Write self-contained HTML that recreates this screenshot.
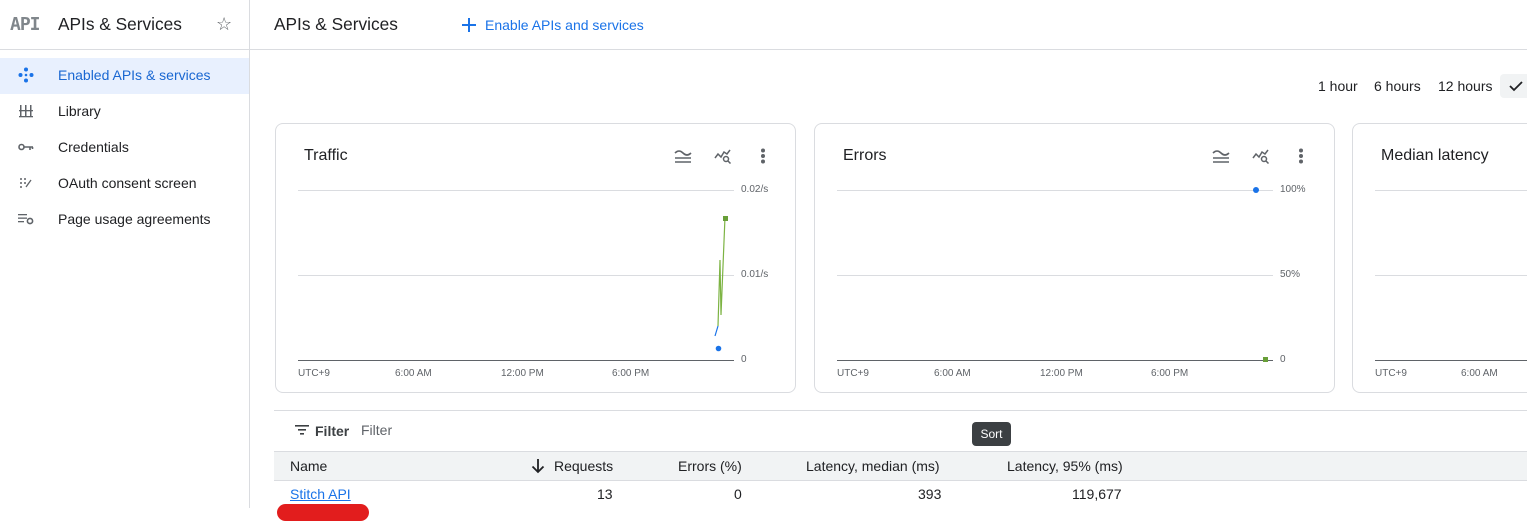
<!DOCTYPE html>
<html><head><meta charset="utf-8"><style>
*{margin:0;padding:0;box-sizing:border-box}
body{width:1527px;height:522px;overflow:hidden;background:#fff;font-family:"Liberation Sans",Arial,sans-serif;color:#202124;position:relative}
.a{position:absolute;white-space:nowrap}
.card{position:absolute;top:123px;height:270px;border:1px solid #dadce0;border-radius:8px;background:#fff}
.grid{position:absolute;height:1px;background:#dadce0}
.axis{position:absolute;height:1px;background:#5f6368}
.sm{font-size:10px;color:#5f6368}
.nav{font-size:14px}
</style></head><body>
<div class="a" style="left:249px;top:0;width:1px;height:508px;background:#dadce0"></div>
<div class="a" style="left:0;top:49px;width:1527px;height:1px;background:#dadce0"></div>
<div class="a" style="left:10px;top:14px;font-family:'DejaVu Sans Mono',monospace;font-weight:bold;font-size:18px;color:#80868b;letter-spacing:-1px">API</div>
<div class="a" style="left:58px;top:14px;font-size:17.3px">APIs &amp; Services</div>
<div class="a" style="left:216px;top:14px;font-size:18px;color:#5f6368">☆</div>
<div class="a" style="left:0;top:58px;width:249px;height:36px;background:#e8f0fe"></div>
<svg class="a" style="left:18px;top:67px" width="16" height="16" viewBox="0 0 16 16" fill="#1a73e8"><circle cx="8" cy="2.5" r="2"/><circle cx="8" cy="13.5" r="2"/><circle cx="2.5" cy="8" r="2"/><circle cx="13.5" cy="8" r="2"/><circle cx="8" cy="8" r="1.3"/></svg>
<div class="a nav" style="left:58px;top:67px;color:#1967d2">Enabled APIs &amp; services</div>
<svg class="a" style="left:19px;top:104px" width="14" height="14" viewBox="0 0 14 14" fill="#5f6368"><rect x="1" y="1" width="1.5" height="12"/><rect x="6" y="1" width="1.5" height="12"/><rect x="11" y="1" width="1.5" height="12"/><rect x="0" y="6" width="14" height="1.3"/><rect x="0" y="12" width="14" height="1.3"/></svg>
<div class="a nav" style="left:58px;top:103px">Library</div>
<svg class="a" style="left:18px;top:143px" width="16" height="8" viewBox="0 0 16 8"><circle cx="3.5" cy="4" r="2.5" fill="none" stroke="#5f6368" stroke-width="1.6"/><path d="M6 4h9M12 4v3M14.5 4v2" stroke="#5f6368" stroke-width="1.6"/></svg>
<div class="a nav" style="left:58px;top:139px">Credentials</div>
<svg class="a" style="left:19px;top:177px" width="14" height="12" viewBox="0 0 14 12" fill="#5f6368"><circle cx="2" cy="2" r="1"/><circle cx="6" cy="2" r="1"/><circle cx="2" cy="6" r="1"/><circle cx="6" cy="6" r="1"/><circle cx="2" cy="10" r="1"/><path d="M7 10l5-7" stroke="#5f6368" stroke-width="1.3"/></svg>
<div class="a nav" style="left:58px;top:175px">OAuth consent screen</div>
<svg class="a" style="left:18px;top:213px" width="16" height="12" viewBox="0 0 16 12" fill="#5f6368"><rect x="0" y="1" width="9" height="1.3"/><rect x="0" y="4.5" width="9" height="1.3"/><rect x="0" y="8" width="6" height="1.3"/><circle cx="12" cy="8" r="2.6" fill="none" stroke="#5f6368" stroke-width="1.6"/></svg>
<div class="a nav" style="left:58px;top:211px">Page usage agreements</div>
<div class="a" style="left:274px;top:14px;font-size:17.3px">APIs &amp; Services</div>
<svg class="a" style="left:461px;top:17px" width="16" height="16" viewBox="0 0 16 16"><path d="M8 1v14M1 8h14" stroke="#1a73e8" stroke-width="2"/></svg>
<div class="a" style="left:485px;top:17px;font-size:14px;color:#1a73e8">Enable APIs and services</div>
<div class="a" style="left:1318px;top:78px;font-size:14px">1 hour</div>
<div class="a" style="left:1374px;top:78px;font-size:14px">6 hours</div>
<div class="a" style="left:1438px;top:78px;font-size:14px">12 hours</div>
<div class="a" style="left:1500px;top:74px;width:30px;height:24px;background:#f1f3f4;border-radius:4px 0 0 4px"></div>
<svg class="a" style="left:1509px;top:80px" width="14" height="12" viewBox="0 0 14 12"><path d="M1 6l4 4 8-8" fill="none" stroke="#202124" stroke-width="1.8"/></svg>
<div class="card" style="left:275px;width:521px"></div>
<div class="a" style="left:304px;top:147px;font-size:16px">Traffic</div>
<div class="card" style="left:814px;width:521px"></div>
<div class="a" style="left:843px;top:147px;font-size:16px">Errors</div>
<div class="card" style="left:1352px;width:200px"></div>
<div class="a" style="left:1381px;top:147px;font-size:16px">Median latency</div>
<svg class="a" style="left:674px;top:148px" width="18" height="16" viewBox="0 0 18 16" fill="none" stroke="#5f6368" stroke-width="1.6"><path d="M1 5q4-4 8 0t8 0M1 10h16M1 14h16"/></svg>
<svg class="a" style="left:714px;top:148px" width="18" height="16" viewBox="0 0 18 16" fill="none" stroke="#5f6368" stroke-width="1.5"><path d="M1 10l3-4 3 3 3-5 3 2 3-4"/><circle cx="12" cy="11" r="2.5"/><path d="M14 13l2.5 2.5"/></svg>
<svg class="a" style="left:760px;top:148px" width="6" height="16" fill="#5f6368"><circle cx="3" cy="2.5" r="2"/><circle cx="3" cy="8" r="2"/><circle cx="3" cy="13.5" r="2"/></svg>
<svg class="a" style="left:1212px;top:148px" width="18" height="16" viewBox="0 0 18 16" fill="none" stroke="#5f6368" stroke-width="1.6"><path d="M1 5q4-4 8 0t8 0M1 10h16M1 14h16"/></svg>
<svg class="a" style="left:1252px;top:148px" width="18" height="16" viewBox="0 0 18 16" fill="none" stroke="#5f6368" stroke-width="1.5"><path d="M1 10l3-4 3 3 3-5 3 2 3-4"/><circle cx="12" cy="11" r="2.5"/><path d="M14 13l2.5 2.5"/></svg>
<svg class="a" style="left:1298px;top:148px" width="6" height="16" fill="#5f6368"><circle cx="3" cy="2.5" r="2"/><circle cx="3" cy="8" r="2"/><circle cx="3" cy="13.5" r="2"/></svg>
<div class="grid" style="left:298px;top:190px;width:436px"></div>
<div class="grid" style="left:298px;top:275px;width:436px"></div>
<div class="axis" style="left:298px;top:360px;width:436px"></div>
<div class="a sm" style="left:741px;top:184px">0.02/s</div>
<div class="a sm" style="left:741px;top:269px">0.01/s</div>
<div class="a sm" style="left:741px;top:354px">0</div>
<div class="a sm" style="left:298px;top:368px">UTC+9</div>
<div class="a sm" style="left:395px;top:368px">6:00 AM</div>
<div class="a sm" style="left:501px;top:368px">12:00 PM</div>
<div class="a sm" style="left:612px;top:368px">6:00 PM</div>
<svg class="a" style="left:700px;top:210px" width="40" height="150"><path d="M15 126l3-10" stroke="#1a73e8" stroke-width="1.2"/><path d="M18 116l2-66 1 55 4-98" stroke="#7cb342" stroke-width="1.2" fill="none"/><rect x="23" y="6" width="5" height="5" fill="#689f38"/><circle cx="18.5" cy="138.5" r="2.8" fill="#1a73e8"/></svg>
<div class="grid" style="left:837px;top:190px;width:436px"></div>
<div class="grid" style="left:837px;top:275px;width:436px"></div>
<div class="axis" style="left:837px;top:360px;width:436px"></div>
<div class="a sm" style="left:1280px;top:184px">100%</div>
<div class="a sm" style="left:1280px;top:269px">50%</div>
<div class="a sm" style="left:1280px;top:354px">0</div>
<div class="a sm" style="left:837px;top:368px">UTC+9</div>
<div class="a sm" style="left:934px;top:368px">6:00 AM</div>
<div class="a sm" style="left:1040px;top:368px">12:00 PM</div>
<div class="a sm" style="left:1151px;top:368px">6:00 PM</div>
<div class="a" style="left:1253px;top:187px;width:6px;height:6px;border-radius:3px;background:#1a73e8"></div>
<div class="a" style="left:1263px;top:357px;width:5px;height:5px;background:#689f38"></div>
<div class="grid" style="left:1375px;top:190px;width:160px"></div>
<div class="grid" style="left:1375px;top:275px;width:160px"></div>
<div class="axis" style="left:1375px;top:360px;width:160px"></div>
<div class="a sm" style="left:1375px;top:368px">UTC+9</div>
<div class="a sm" style="left:1461px;top:368px">6:00 AM</div>
<div class="a" style="left:274px;top:410px;width:1253px;height:1px;background:#dadce0"></div>
<svg class="a" style="left:295px;top:425px" width="14" height="10" fill="#3c4043"><rect x="0" y="0" width="14" height="1.6"/><rect x="3" y="4" width="8" height="1.6"/><rect x="5" y="8" width="4" height="1.6"/></svg>
<div class="a" style="left:315px;top:423px;font-size:14px;font-weight:bold;color:#3c4043">Filter</div>
<div class="a" style="left:361px;top:422px;font-size:14px;color:#5f6368">Filter</div>
<div class="a" style="left:972px;top:422px;width:39px;height:24px;background:#3c4043;border-radius:4px;color:#fff;font-size:12px;text-align:center;line-height:24px">Sort</div>
<div class="a" style="left:274px;top:451px;width:1253px;height:30px;background:#f1f3f4;border-top:1px solid #dadce0;border-bottom:1px solid #dadce0"></div>
<div class="a" style="left:290px;top:458px;font-size:14px">Name</div>
<svg class="a" style="left:531px;top:458px" width="14" height="16" viewBox="0 0 14 16"><path d="M7 1v13M1.5 8.5L7 14l5.5-5.5" fill="none" stroke="#202124" stroke-width="1.8"/></svg>
<div class="a" style="left:554px;top:458px;font-size:14px">Requests</div>
<div class="a" style="left:678px;top:458px;font-size:14px">Errors (%)</div>
<div class="a" style="left:806px;top:458px;font-size:14px">Latency, median (ms)</div>
<div class="a" style="left:1007px;top:458px;font-size:14px">Latency, 95% (ms)</div>
<div class="a" style="left:290px;top:486px;font-size:14px;color:#1a73e8;text-decoration:underline">Stitch API</div>
<div class="a" style="left:597px;top:486px;font-size:14px">13</div>
<div class="a" style="left:734px;top:486px;font-size:14px">0</div>
<div class="a" style="left:918px;top:486px;font-size:14px">393</div>
<div class="a" style="left:1072px;top:486px;font-size:14px">119,677</div>
<div class="a" style="left:277px;top:504px;width:92px;height:17px;background:#e21d1d;border-radius:9px"></div>
</body></html>
